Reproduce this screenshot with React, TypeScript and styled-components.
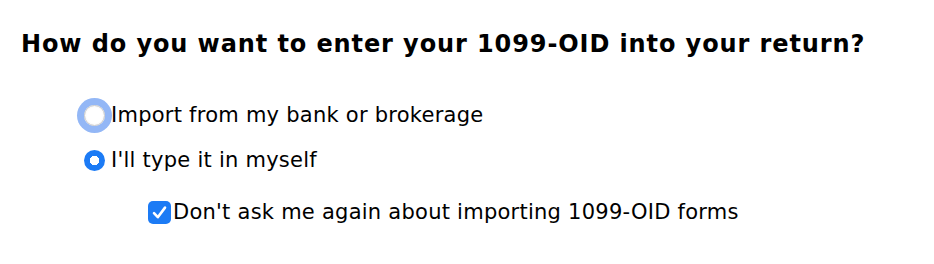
import React, { useState } from 'react';
import styled, { createGlobalStyle } from 'styled-components';

const GlobalStyle = createGlobalStyle`
  html, body {
    margin: 0;
    padding: 0;
    background: #ffffff;
  }
  body {
    font-family: "DejaVu Sans", Verdana, sans-serif;
    color: #000000;
  }
`;

const Page = styled.div`
  padding: 30px 0 0 21px;
`;

const Heading = styled.h2`
  margin: 0;
  font-size: 24px;
  line-height: 28px;
  letter-spacing: 0.9px;
  font-weight: bold;
  white-space: nowrap;
`;

const Options = styled.div`
  display: flex;
  flex-direction: column;
  margin-top: 45px;
  padding-left: 63px;
`;

const Option = styled.label<{ $indent?: number; $gap?: number }>`
  display: flex;
  align-items: center;
  margin-left: ${(p) => p.$indent ?? 0}px;
  margin-top: ${(p) => p.$gap ?? 0}px;
  font-size: 21px;
  line-height: 24px;
  letter-spacing: 0.25px;
  white-space: nowrap;
  cursor: default;
`;

const Radio = styled.input.attrs({ type: 'radio' })<{ $focused?: boolean }>`
  appearance: none;
  -webkit-appearance: none;
  flex: none;
  width: 21px;
  height: 21px;
  margin: 0 6px 0 0;
  border-radius: 50%;
  border: 1px solid #c9c9c9;
  background: radial-gradient(circle at 50% 50%, #ffffff 55%, #ececec 100%);
  box-shadow: ${(p) => (p.$focused ? '0 0 0 7px #93b7f6' : 'none')};
  box-sizing: border-box;
  outline: none;

  &:checked {
    border: none;
    background: radial-gradient(circle at 50% 50%, #ffffff 0 4.5px, #1c7bf5 5px);
  }
`;

const Check = styled.span`
  flex: none;
  width: 23px;
  height: 23px;
  margin-right: 2px;
  border-radius: 5px;
  background: #1c7bf5;
  display: flex;
  align-items: center;
  justify-content: center;
`;

export default function App() {
  const [mode, setMode] = useState<'import' | 'type'>('type');

  return (
    <>
      <GlobalStyle />
      <Page>
        <Heading>How do you want to enter your 1099-OID into your return?</Heading>
        <Options>
          <Option>
            <Radio
              name="entry"
              $focused
              checked={mode === 'import'}
              onChange={() => setMode('import')}
            />
            Import from my bank or brokerage
          </Option>
          <Option $gap={21}>
            <Radio name="entry" checked={mode === 'type'} onChange={() => setMode('type')} />
            I'll type it in myself
          </Option>
          <Option $indent={64} $gap={28}>
            <Check>
              <svg width="17" height="17" viewBox="0 0 17 17" fill="none">
                <path
                  d="M3 9.2 L6.8 13.2 L14 3.6"
                  stroke="#ffffff"
                  strokeWidth="2.6"
                  strokeLinecap="round"
                  strokeLinejoin="round"
                />
              </svg>
            </Check>
            Don't ask me again about importing 1099-OID forms
          </Option>
        </Options>
      </Page>
    </>
  );
}
